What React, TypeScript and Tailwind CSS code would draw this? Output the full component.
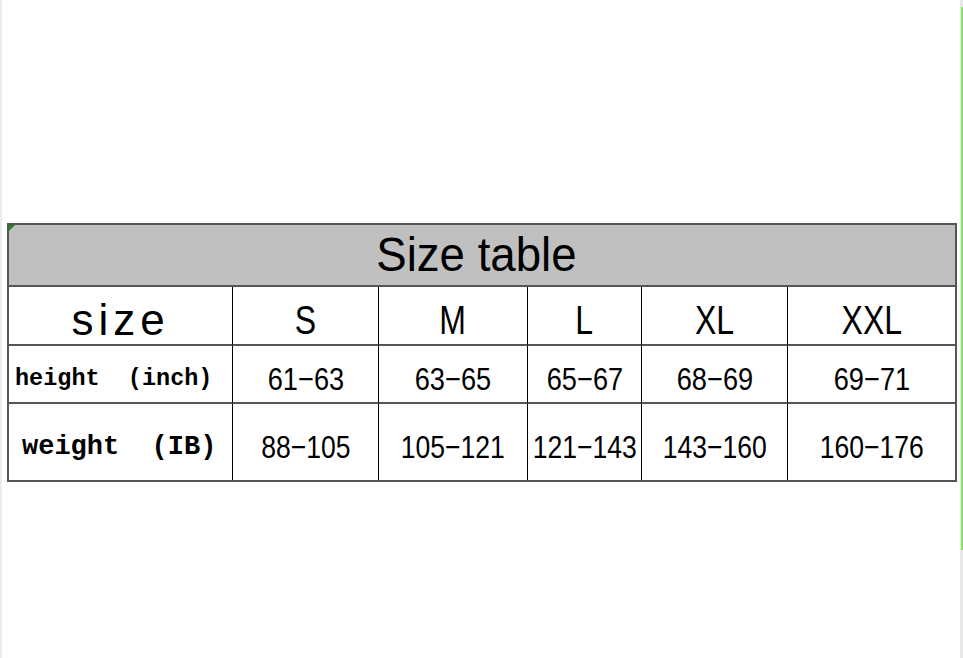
const sizes = ['S', 'M', 'L', 'XL', 'XXL']
const heights = ['61-63', '63-65', '65-67', '68-69', '69-71']
const weights = ['88-105', '105-121', '121-143', '143-160', '160-176']

const num = "font-['Liberation_Sans',Arial,sans-serif]"
const mono = "font-['Liberation_Mono','DejaVu_Sans_Mono',monospace]"

export default function App() {
  return (
    <div className="relative h-[658px] w-[963px] overflow-hidden bg-white">
      {/* sheet edges */}
      <div className="absolute left-0 top-0 h-full w-[2px] bg-[#ececec]" />
      <div className="absolute right-0 top-0 h-full w-[3px] bg-[#e8e8e8]" />
      <div className="absolute right-0 top-[7px] h-[543px] w-[2px] bg-[#8fe06a]" />

      <div className="ml-[7px] mt-[223px] w-[950px]">
        <div className="relative flex h-[64px] items-center justify-center border-2 border-[#555] bg-[#c0c0c0] text-[48px] text-black">
          <div className="absolute left-0 top-0 h-0 w-0 border-l-[6px] border-t-[6px] border-l-transparent border-t-[#1a8a1a] [transform:scaleX(-1)]" />
          <span className={`${num} -translate-x-[6px] scale-x-[0.95]`}>Size table</span>
        </div>
        <div className="grid grid-cols-[224px_146px_149px_114px_146px_167px] border-x-2 border-b-2 border-[#555] text-black">
          <div className={`flex h-[59px] items-center justify-center border-r border-b-2 border-r-black border-b-[#555] pt-2 text-[44px] tracking-[5px] ${num}`}>
            size
          </div>
          {sizes.map((s, i) => (
            <div
              key={s}
              className={`flex h-[59px] items-center justify-center border-b-2 border-b-[#555] pt-2 text-[40px] ${num} ${i < 4 ? 'border-r border-r-black' : ''}`}
            >
              <span className="scale-x-[0.8]">{s}</span>
            </div>
          ))}

          <div className={`flex h-[58px] items-center border-r border-b-2 border-r-black border-b-[#555] pl-[6px] pt-[10px] text-[23.5px] font-bold whitespace-pre ${mono}`}>
            {'height  (inch)'}
          </div>
          {heights.map((h, i) => (
            <div
              key={h}
              className={`flex h-[58px] items-center justify-center border-b-2 border-b-[#555] pt-[10px] text-[32px] ${num} ${i < 4 ? 'border-r border-r-black' : ''}`}
            >
              <span className="scale-x-[0.85]">{h.replace('-', '−')}</span>
            </div>
          ))}

          <div className={`flex h-[76px] items-center border-r border-r-black pl-[13px] pt-[10px] text-[27px] font-bold whitespace-pre ${mono}`}>
            {'weight  (IB)'}
          </div>
          {weights.map((w, i) => (
            <div
              key={w}
              className={`flex h-[76px] items-center justify-center pt-[10px] text-[32px] ${num} ${i < 4 ? 'border-r border-r-black' : ''}`}
            >
              <span className="scale-x-[0.83]">{w.replace('-', '−')}</span>
            </div>
          ))}
        </div>
      </div>
    </div>
  )
}
